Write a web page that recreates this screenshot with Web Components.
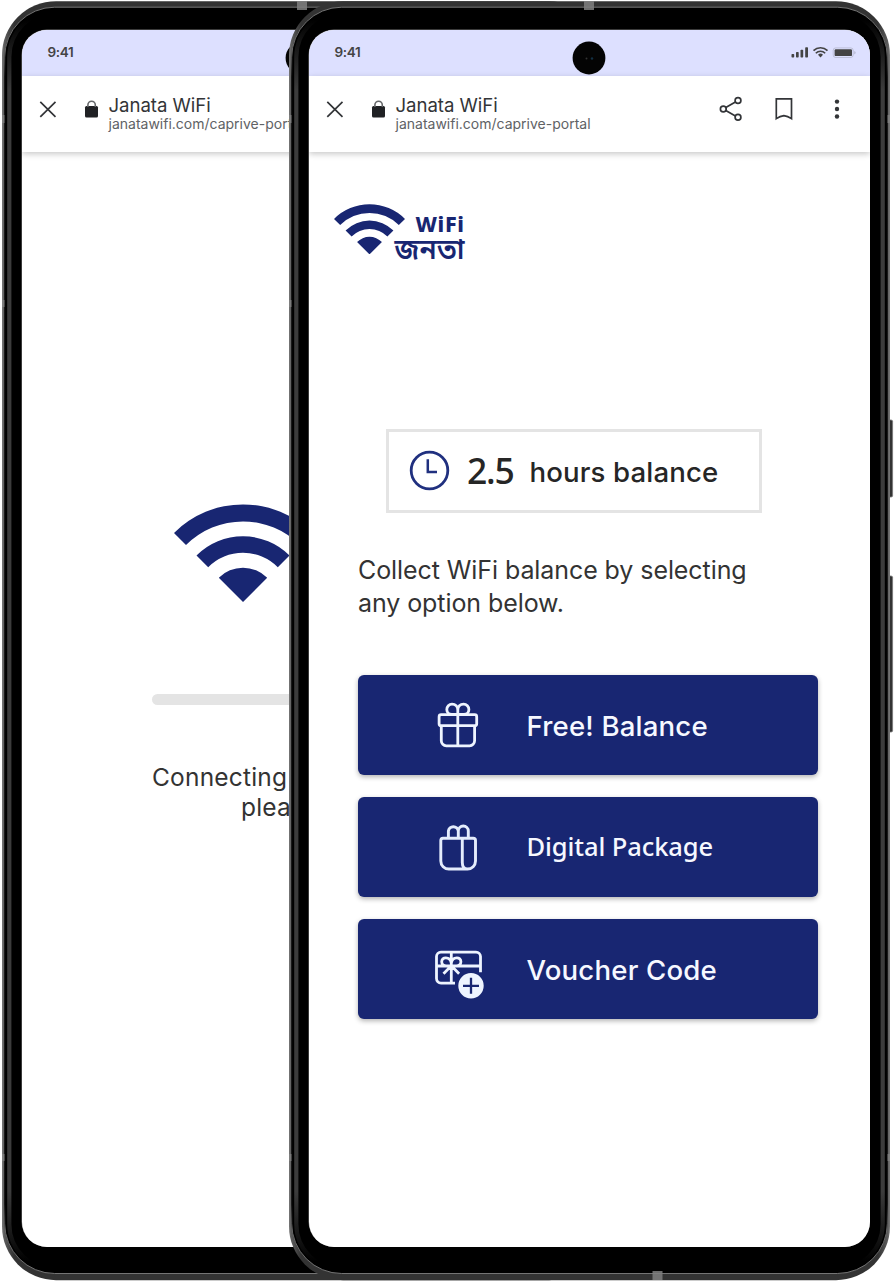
<!DOCTYPE html>
<html lang="en">
<head>
<meta charset="utf-8">
<title>Janata WiFi</title>
<style>
html,body{margin:0;background:#fff;font-family:Inter,"Noto Sans",sans-serif;color:#333}
</style>
</head>
<body>
<portal-stage>
  <phone-device slot="back"><connecting-screen></connecting-screen></phone-device>
  <phone-device slot="front" buttons><balance-screen></balance-screen></phone-device>
</portal-stage>
<script>
function define(name, html){
  const t=document.createElement('template');
  t.innerHTML=html;
  customElements.define(name,class extends HTMLElement{
    constructor(){super();this.attachShadow({mode:'open'}).append(t.content.cloneNode(true));}
  });
}

define('portal-stage',`<style>
:host{display:grid;width:894px;height:1281px;overflow:hidden;grid-template:1281px/894px}
::slotted(*){grid-area:1/1;isolation:isolate}
::slotted([slot=back]){margin-left:2px}
::slotted([slot=front]){margin-left:289px}
</style><slot name="back"></slot><slot name="front"></slot>`);

define('phone-device',`<style>
:host{display:grid;grid-template:1281px/605px;justify-content:start;overflow:hidden}
svg,.screen{grid-area:1/1}
.screen{margin:30px 0 0 20px;width:560.5px;height:1216.5px;border-radius:25px;overflow:hidden;background:#fff;display:flex;flex-direction:column}
.keys{display:none}
:host([buttons]) .keys{display:inline}
</style>
<svg width="605" height="1281" viewBox="0 0 605 1281">
<defs>
<linearGradient id="side" x1="0" x2="1" y1="0" y2="0"><stop offset="0" stop-color="#777"/><stop offset=".004" stop-color="#5c5c5c"/><stop offset=".02" stop-color="#333"/><stop offset=".98" stop-color="#333"/><stop offset=".996" stop-color="#5c5c5c"/><stop offset="1" stop-color="#777"/></linearGradient>
<linearGradient id="fade" gradientUnits="userSpaceOnUse" x1="0" x2="0" y1="0" y2="1281"><stop offset=".015" stop-color="#3c3c3c" stop-opacity="0"/><stop offset=".07" stop-color="#3c3c3c"/><stop offset=".93" stop-color="#3c3c3c"/><stop offset=".985" stop-color="#3c3c3c" stop-opacity="0"/></linearGradient>
<linearGradient id="rim" gradientUnits="userSpaceOnUse" x1="0" x2="0" y1="0" y2="1281"><stop offset="0" stop-color="#777"/><stop offset=".04" stop-color="#666"/><stop offset=".06" stop-color="#111"/><stop offset=".94" stop-color="#111"/><stop offset=".96" stop-color="#666"/><stop offset="1" stop-color="#777"/></linearGradient>
</defs>
<g class="keys" fill="#333" stroke="#777" stroke-width=".8"><rect x="598" y="420" width="5.6" height="77" rx="1.5"/><rect x="598" y="576" width="5.6" height="156" rx="1.5"/></g>
<rect x="0" y="1.2" width="601" height="1279" rx="54" fill="url(#side)"/>
<rect x="2.7" y="7.2" width="595.6" height="1266.3" rx="50" fill="#000" stroke="url(#rim)" stroke-width="1"/>
<rect x="7.3" y="11" width="586.4" height="1259" rx="46" fill="none" stroke="url(#fade)" stroke-width="4.2"/>
<g fill="#808080" opacity=".85"><rect x="295" y="1" width="10" height="9"/><rect x="363.5" y="1271" width="10" height="9"/><rect y="115" width="2.5" height="8"/><rect x="598.5" y="115" width="2.5" height="8"/><rect y="1154" width="2.5" height="7"/><rect x="598.5" y="1154" width="2.5" height="7"/><rect y="300" width="2.5" height="7"/></g>
<rect x="19.5" y="29.5" width="561.5" height="1217.5" rx="25.5" fill="#777"/>
</svg>
<div class="screen"><status-bar></status-bar><browser-bar></browser-bar><slot></slot></div>`);

define('status-bar',`<style>
:host{display:grid;grid-template-columns:1fr 34px 1fr;align-items:center;height:46px;background:#dde0ff;flex:none}
.time{padding-left:25.5px;font-size:13.5px;font-weight:600;line-height:16px;color:#444;letter-spacing:-.3px;margin-top:-3px}
.cam{margin-top:9px}
.right{justify-self:end;margin-right:14px}
svg{display:block}
</style>
<div class="time">9:41</div>
<svg class="cam" width="34" height="34" viewBox="0 0 34 34"><circle cx="17" cy="17" r="16.4" fill="#040404"/><circle cx="14.5" cy="17.5" r="1" fill="#333"/><circle cx="20" cy="17.5" r="1.2" fill="#123044"/></svg>
<svg class="right" width="66" height="14" viewBox="790 46 66 14">
<g fill="#444"><rect x="791.5" y="54" width="2.7" height="3.5" rx=".7"/><rect x="796" y="52" width="2.7" height="5.5" rx=".7"/><rect x="800.5" y="49.7" width="2.7" height="7.8" rx=".7"/><rect x="805.2" y="47.3" width="2.8" height="10.2" rx=".7"/><path d="M818 54.7a3.8 3.8 0 0 1 5 0l-2.5 2.9z"/><rect x="834.6" y="49.3" width="17.4" height="6.8" rx="1.2"/></g>
<g fill="none" stroke="#444" stroke-width="1.6"><path d="M813.5 50.6a10 10 0 0 1 14 0M815.8 53.2a6.7 6.7 0 0 1 9.4 0"/></g>
<rect x="833.2" y="47.9" width="20" height="9.6" rx="2.5" fill="none" stroke="#444" stroke-opacity=".2"/><path d="M854.6 51v3.4q1.5-1.7 0-3.4" fill="#444" fill-opacity=".5"/></svg>`);

define('browser-bar',`<style>
:host{display:flex;height:76px;flex:none;box-shadow:0 2px 6px rgba(0,0,0,.22);background:#fff;position:relative}
svg{display:block;flex:none}
.t{margin:18px 0 0 .5px;flex:1;white-space:nowrap}
.a{font-size:18.6px;line-height:23px;color:#333538;letter-spacing:-.05px}
.b{font-size:14px;line-height:15px;color:#606265;letter-spacing:0;margin-top:-1px}
</style>
<svg width="86" height="76" viewBox="309 76 86 76"><path d="M327.3 101.8l15.2 15M342.5 101.8l-15.2 15" stroke="#333538" stroke-width="1.7"/><rect x="372" y="106" width="13" height="11.6" rx="1.5" fill="#202124"/><path d="M374.9 107v-2a3.7 3.7 0 0 1 7.4 0v2" fill="none" stroke="#66686a" stroke-width="1.6"/></svg>
<div class="t"><div class="a">Janata WiFi</div><div class="b">janatawifi.com/caprive-portal</div></div>
<svg width="160" height="76" viewBox="710 76 160 76"><g fill="none" stroke="#333538" stroke-width="1.7"><circle cx="738" cy="100.5" r="2.9"/><circle cx="723.3" cy="109" r="2.9"/><circle cx="738" cy="117.3" r="2.9"/><path d="M725.8 107.6l9.6-5.6M725.8 110.4l9.6 5.5M776.3 98.8h15.2v19.8q-3.8-2.6-7.6-3-3.8.4-7.6 3z"/></g><g fill="#333538"><circle cx="837" cy="101.6" r="2.2"/><circle cx="837" cy="109" r="2.2"/><circle cx="837" cy="116.5" r="2.2"/></g></svg>`);

define('wifi-mark',`<style>:host{display:block;width:138px}svg{display:block;width:100%}</style>
<svg viewBox="-69 -98 138 98" fill="#182672"><path d="M-69-69A97.6 97.6 0 0 1 69-69L57-57A80.6 80.6 0 0 0-57-57ZM-46.5-46.5A65.8 65.8 0 0 1 46.5-46.5L34.8-34.8A49.2 49.2 0 0 0-34.8-34.8ZM-24.2-24.2A34.2 34.2 0 0 1 24.2-24.2L0 0Z"/></svg>`);

define('connecting-screen',`<style>
:host{display:block;padding-top:352.4px}
wifi-mark{margin-left:151.7px}
.bar{width:300px;height:11px;border-radius:6px;background:#e4e4e4;margin:91.6px 0 0 130px}
p{margin:57.5px 0 0 130px;width:300px;font-size:24.5px;line-height:30px;letter-spacing:.2px;color:#333}
span{display:block}
.two{padding-left:89px}
</style>
<wifi-mark></wifi-mark><div class="bar"></div><p><span>Connecting</span><span class="two">please wait</span></p>`);

define('janata-logo',`<style>
:host{display:flex;height:58px;color:#182672}
wifi-mark{width:71px}
.n{margin-left:-10.5px;width:71px;display:flex;flex-direction:column}
.w{font:800 21.5px/22px "Noto Sans",sans-serif;align-self:flex-end;margin:8.5px 1px 0 0;letter-spacing:.6px}
.b{font:600 28px/28px "Noto Sans Bengali","Noto Sans",FreeSans,sans-serif;white-space:nowrap;letter-spacing:.2px;margin-top:3px}
</style><wifi-mark></wifi-mark><div class="n"><span class="w">WiFi</span><span class="b" lang="bn">জনতা</span></div>`);

define('balance-card',`<style>
:host{display:flex;align-items:center;box-sizing:border-box;width:376px;height:84px;border:3px solid #e4e4e4;color:#262626}
svg{margin:-1px 0 0 20px;flex:none}
.n{font:550 35.5px/40px "Noto Sans",sans-serif;letter-spacing:-1.2px;margin:-3px 0 0 17px;width:62.5px}
.h{font-size:27.6px;font-weight:500;line-height:32px;letter-spacing:.14px;white-space:nowrap;margin-top:2px}
</style><svg width="41" height="41" viewBox="0 0 41 41" fill="none" stroke="#20307f"><circle cx="20.5" cy="20.5" r="18.3" stroke-width="2.8"/><path d="M18.8 9.2v12.8h9.2" stroke-width="2.5"/></svg><span class="n">2.5</span><span class="h">hours balance</span>`);

define('option-button',`<style>
:host{display:flex;align-items:center;height:100px;width:460px;border-radius:6px;background:#182672;color:#f6f8ff;box-shadow:0 2px 5px rgba(0,0,0,.3);font-size:27.6px;font-weight:500;line-height:34px;letter-spacing:.18px;white-space:nowrap}
.i{width:60px;height:100px;margin:0 36.5px 0 72px;flex:none}
:host([alt]){font-family:"Noto Sans",sans-serif;font-size:25.5px;letter-spacing:-.1px}
.l{margin-top:2px}
:host([alt]) .l{margin-top:-2px}
</style><div class="i"><slot name="icon"></slot></div><span class="l"><slot></slot></span>`);

define('balance-screen',`<style>
:host{display:block;padding:52px 0 0 25px}
balance-card{margin:167px 0 0 52px}
p{margin:41px 0 0 24px;font-size:25px;line-height:33px;letter-spacing:-.08px;color:#333;width:440px}
.o{display:flex;flex-direction:column;gap:22px;margin:55px 0 0 24px}
svg{display:block}
</style>
<janata-logo></janata-logo>
<balance-card></balance-card>
<p>Collect WiFi balance by selecting<br>any option below.</p>
<div class="o">
<option-button><svg slot="icon" width="60" height="100" viewBox="430 675 60 100" fill="none" stroke="#eef4ff" stroke-width="2.8"><rect x="439.1" y="714.7" width="37.6" height="11" rx="2"/><path d="M441.3 726v14.8a5 5 0 0 0 5 5h23.3a5 5 0 0 0 5-5V726M457.8 710v36M457.8 714.5h-6c-3 0-5-2.3-5-5s2.3-5.4 5.2-5.4c3.5 0 5.8 2.6 5.8 6 0-3.4 2.3-6 5.8-6 3 0 5.3 2.6 5.3 5.4s-2 5-5 5z"/></svg>Free! Balance</option-button>
<option-button alt><svg slot="icon" width="60" height="100" viewBox="430 797 60 100" fill="none" stroke="#e4ecfc" stroke-width="2.9"><path d="M443 838.2h30.2a2.3 2.3 0 0 1 2.3 2.3V861a8 8 0 0 1-8 8h-18.7a8 8 0 0 1-8-8v-20.5a2.3 2.3 0 0 1 2.2-2.3zM462.3 838v24.5q0 6.4 5.2 6.4M448.4 838v-7a5 5 0 0 1 9.9 0v7M458.3 831a5 5 0 0 1 10 0v7"/></svg>Digital Package</option-button>
<option-button><svg slot="icon" width="60" height="100" viewBox="430 919.7 60 100" fill="none" stroke="#eef4ff" stroke-width="2.8"><path d="M455 983.8h-14a4.5 4.5 0 0 1-4.5-4.5v-22a4.5 4.5 0 0 1 4.5-4.5h35a4.5 4.5 0 0 1 4.5 4.5V973M437 966.7h43M451.3 953v31M451.3 966.5h-5c-2.8 0-4.6-1.8-4.6-4.1s1.8-3.9 4.1-3.9c2.9 0 5 2.2 5.5 5.2.5-3 2.6-5.2 5.5-5.2 2.4 0 4.1 1.6 4.1 3.9s-1.8 4.1-4.6 4.1zM451.3 966.5l-7.8 8M451.3 966.5l7.8 8"/><circle cx="471" cy="986.5" r="11.3" fill="#eef4ff"/><path d="M471 978.5v16M463 986.5h16" stroke="#182672" stroke-width="2.3"/></svg>Voucher Code</option-button>
</div>`);
</script>
</body>
</html>
